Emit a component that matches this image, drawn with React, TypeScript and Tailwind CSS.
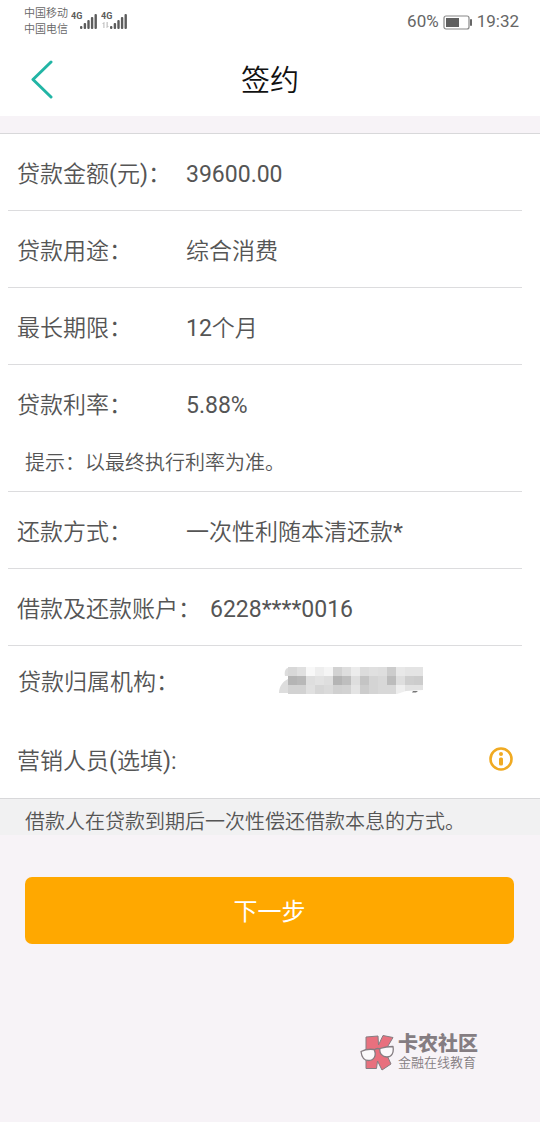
import { useState } from 'react';

interface LoanField {
  label: string;
  value: string;
  hint?: string;
  wide?: boolean;
}

const loanFields: LoanField[] = [
  { label: '贷款金额(元)：', value: '39600.00' },
  { label: '贷款用途：', value: '综合消费' },
  { label: '最长期限：', value: '12个月' },
  { label: '贷款利率：', value: '5.88%', hint: '提示：以最终执行利率为准。' },
  { label: '还款方式：', value: '一次性利随本清还款*' },
  { label: '借款及还款账户：', value: '6228****0016', wide: true },
];

// Grey levels of the masked branch name, one list per row of blocks
const maskRows = [
  ['#d8d8d8', '#e0e0e0', '#f8f8f8', '#eeeeee', '#f5f5f5', '#d2d2d2', '#dedede', '#ececec', '#dcdcdc', '#e0e0e0', '#dedede', '#cccccc', '#e8e8e8', '#e4e4e4', '#e4e4e4'],
  ['#b4b4b4', '#b8b8b8', '#dedede', '#e2e2e2', '#dedede', '#b4b4b4', '#bebebe', '#dedede', '#c4c4c4', '#d4d4d4', '#d8d8d8', '#bcbcbc', '#dedede', '#cecece', '#cccccc'],
  ['#d2d2d2', '#d2d2d2', '#e0e0e0', '#d6d6d6', '#dadada', '#d0d0d0', '#d2d2d2', '#e4e4e4', '#cccccc', '#d4d4d4', '#d8d8d8', '#d8d8d8', '#eeeeee', '#e2e2e2', '#e2e2e2'],
];

function MixedText({ text }: { text: string }) {
  return (
    <>
      {text.split(/([\x21-\x7e]+)/).filter(Boolean).map((part, index) => (
        <span key={index} className={/^[\x21-\x7e]/.test(part) ? 'font-normal' : 'font-[350]'}>
          {part}
        </span>
      ))}
    </>
  );
}

function SignalIcon({ withData = false }: { withData?: boolean }) {
  return (
    <svg className="h-5 w-7" viewBox="0 0 28 20" fill="#5c5c5c" aria-hidden="true">
      <text x="0" y="8" fontSize="9" fontWeight="700" fontFamily="Roboto, sans-serif">4G</text>
      {withData && <path d="M3 11l-2 2h1.300v4h1.200v-6zM6 17l2-2H6.800v-4H5.500v6z" fill="#c4c4c4" />}
      <rect x="9" y="15" width="2.400" height="3" rx="1" />
      <rect x="12.700" y="12" width="2.400" height="6" rx="1" />
      <rect x="16.300" y="9" width="2.400" height="9" rx="1" />
      <rect x="19.900" y="6" width="2.400" height="12" rx="1" />
      <rect x="23.500" y="3" width="2.400" height="15" rx="1" />
    </svg>
  );
}

function StatusBar() {
  return (
    <div className="flex h-[42px] items-center justify-between pl-6 pr-[21px] pt-[2px] text-[#666]">
      <div className="flex items-center">
        <div className="text-[11px] font-[350] leading-4">
          <div>中国移动</div>
          <div>中国电信</div>
        </div>
        <div className="ml-[3px] flex gap-[2px] pb-[2px]">
          <SignalIcon />
          <SignalIcon withData />
        </div>
      </div>
      <div className="flex items-center gap-1 text-[17px]">
        <span>60%</span>
        <svg className="h-[15px] w-[30px]" viewBox="0 0 30 15" aria-hidden="true">
          <rect x="1" y="1" width="25" height="13" rx="2" fill="none" stroke="#888" strokeWidth="1.200" />
          <rect x="3" y="3" width="13" height="9" fill="#5f5f5f" />
          <rect x="27" y="4" width="2" height="7" rx="1" fill="#666" />
        </svg>
        <span>19:32</span>
      </div>
    </div>
  );
}

function MaskedName() {
  return (
    <svg className="h-[27px] w-[145px]" viewBox="0 0 145 27" role="img" aria-label="已隐藏">
      <path d="M9 9h-3c-1-5 1-8 3-8zM9 12c-6 3-9 8-9 14h9z" fill="#dddddd" />
      {maskRows.map((row, y) =>
        row.map((fill, x) => (
          <rect key={`${x}-${y}`} x={9 + x * 9} y={y * 9} width="9" height="9" fill={fill} />
        ))
      )}
      <path d="M118 27l9-3 17-1v4z" fill="#fff" />
      <path d="M134 24h5l-2 1.500h-4z" fill="#777" />
    </svg>
  );
}

function Watermark() {
  return (
    <div className="flex items-center gap-1 text-[#857d82]">
      <svg
        className="h-[37px] w-[34px]"
        viewBox="0 0 34 37"
        stroke="#857d82"
        strokeLinejoin="round"
        aria-hidden="true"
      >
        <path d="M6 3L18 2 18.500 11 23 1.500 33 3.500 25 17 31 30 22 36 17.500 27 16.500 34.500 6 34.500z" fill="#e8707e" />
        <path d="M1 17.500q6-3 13-2c3 6 0 11-5.500 11S1.500 22 1 17.500z" fill="#fbf9fb" strokeWidth="1.300" />
        <path d="M20 14.500q6-2 13-2c1 6-1 10.500-6 10.500s-8-4-7-8.500z" fill="#fbf9fb" strokeWidth="1.300" />
        <path d="M14 16q3-2.500 6-1" fill="none" strokeWidth="1.500" />
      </svg>
      <div>
        <div className="text-[20px] font-black leading-[22px]">卡农社区</div>
        <div className="text-[13px] font-[350] leading-4">金融在线教育</div>
      </div>
    </div>
  );
}

export default function App() {
  const [staff, setStaff] = useState('');

  return (
    <div className="flex min-h-screen flex-col bg-[#f7f3f7] font-[Roboto,'Noto_Sans_CJK_SC',sans-serif] text-[#555]">
      <header className="bg-white">
        <StatusBar />
        <div className="grid h-[74px] grid-cols-[1fr_auto_1fr] items-center">
          <button type="button" aria-label="返回" className="ml-[30px] w-6">
            <svg className="h-10 w-6" viewBox="0 0 24 40" fill="none" stroke="#22b5a5" strokeWidth="3">
              <path d="M21 3L3 20.500 21 38" strokeLinecap="round" strokeLinejoin="round" />
            </svg>
          </button>
          <h1 className="pt-[3px] text-[29px] font-[350] leading-10 text-[#111]">签约</h1>
        </div>
      </header>

      <main className="mt-[17px]">
        <section className="border-y border-[#d8d8da] bg-white">
          <dl className="ml-2 mr-[18px] text-[23px]">
            {loanFields.map((field) => (
              <div key={field.label} className="border-b border-[#dcdcde]">
                <div className="flex h-[76px] items-center pl-[9px] pt-[6px]">
                  <dt className={field.wide ? 'w-[193px]' : 'w-[169px]'}>
                    <MixedText text={field.label} />
                  </dt>
                  <dd>
                    <MixedText text={field.value} />
                  </dd>
                </div>
                {field.hint && (
                  <dd className="h-[50px] pl-[17px] pt-2 text-[20px] font-[350] leading-7">{field.hint}</dd>
                )}
              </div>
            ))}
            <div className="flex h-[70px] items-center pl-[10px] pt-[2px]">
              <dt className="w-[261px] pt-[2px] font-[350]">贷款归属机构：</dt>
              <dd className="pb-1"><MaskedName /></dd>
            </div>
          </dl>
          <div className="flex h-[82px] items-center pl-[17px] pr-[26px] pt-1 text-[23px]">
            <label htmlFor="staff" className="pt-[6px]">
              <MixedText text="营销人员(选填):" />
            </label>
            <input
              id="staff"
              value={staff}
              onChange={(e) => setStaff(e.target.value)}
              className="min-w-0 flex-1 bg-transparent px-2 outline-none"
            />
            <button type="button" aria-label="说明">
              <svg className="h-[26px] w-[26px]" viewBox="0 0 26 26" fill="#f0aa22">
                <circle cx="13" cy="13" r="10.500" fill="none" stroke="#f0aa22" strokeWidth="2.600" />
                <circle cx="13" cy="8" r="2" />
                <rect x="11" y="11.500" width="4" height="8" rx="1.500" />
              </svg>
            </button>
          </div>
        </section>

        <p className="h-9 bg-[#f1f1f2] pl-[25px] pt-[9px] text-[20px] font-[350] leading-7">
          借款人在贷款到期后一次性偿还借款本息的方式。
        </p>

        <div className="mt-[42px] pl-[25px] pr-[26px]">
          <button type="button" className="h-[67px] w-full rounded-[7px] bg-[#ffa800] pt-[3px] text-[24px] text-white">
            下一步
          </button>
        </div>
      </main>

      <footer className="mt-[89px] flex justify-end pr-[62px]">
        <Watermark />
      </footer>
    </div>
  );
}
